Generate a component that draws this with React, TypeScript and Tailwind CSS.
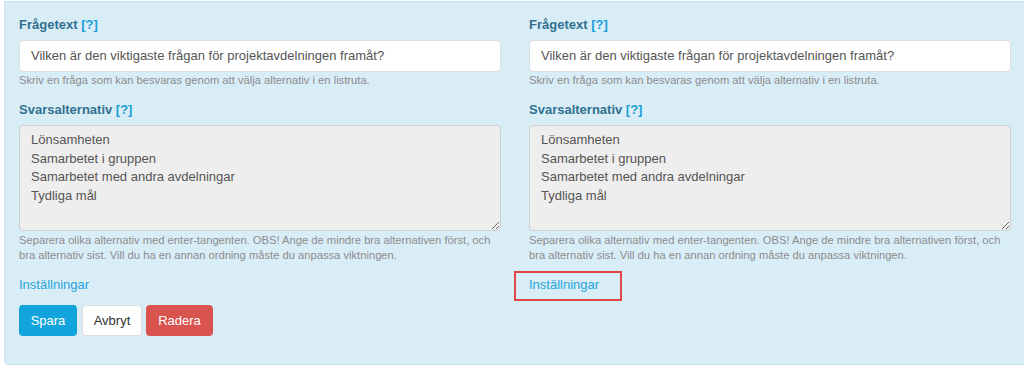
import React from "react";

const font = { fontFamily: '"Liberation Sans", Arial, sans-serif' };

function Column({ buttons, boxed }: { buttons?: boolean; boxed?: boolean }) {
  return (
    <div className="w-[482px] shrink-0">
      <div className="h-[20px] leading-[20px] text-[13px] font-bold text-[#31708f]">
        Frågetext <span className="text-[#1a9fd9]">[?]</span>
      </div>
      <div className="mt-[5px] h-[32px] rounded-[4px] border border-[#dcdcdc] bg-white px-[11px] text-[13px] leading-[30px] text-[#555]">
        Vilken är den viktigaste frågan för projektavdelningen framåt?
      </div>
      <div className="mt-px text-[11.2px] leading-[15px] text-[#8c8c8c]">
        Skriv en fråga som kan besvaras genom att välja alternativ i en listruta.
      </div>
      <div className="mt-[12px] h-[20px] leading-[20px] text-[13px] font-bold text-[#31708f]">
        Svarsalternativ <span className="text-[#1a9fd9]">[?]</span>
      </div>
      <textarea
        readOnly
        className="mt-[5px] block h-[106px] w-full resize-y rounded-[4px] border border-[#d0d0d0] bg-[#eeeeee] px-[11px] pt-[5px] text-[13px] leading-[18.7px] text-[#555] outline-none"
        style={font}
        value={"Lönsamheten\nSamarbetet i gruppen\nSamarbetet med andra avdelningar\nTydliga mål"}
      />
      <div className="mt-[2px] text-[11.2px] leading-[15px] text-[#8c8c8c]">
        Separera olika alternativ med enter-tangenten. OBS! Ange de mindre bra alternativen först, och
        bra alternativ sist. Vill du ha en annan ordning måste du anpassa viktningen.
      </div>
      <div className="relative mt-[12px] h-[20px] text-[13px] leading-[20px] text-[#25a4dc]">
        Inställningar
        {boxed && (
          <div className="absolute left-[-15px] top-[-4px] h-[30px] w-[108px] border-2 border-[#e04646]" />
        )}
      </div>
      {buttons && (
        <div className="mt-[10px] flex">
          <button className="h-[31px] w-[58px] rounded-[4px] bg-[#11a3dc] text-[13px] text-white" style={font}>
            Spara
          </button>
          <button className="ml-[5px] h-[31px] w-[60px] rounded-[4px] border border-[#dddddd] bg-white text-[13px] text-[#333]" style={font}>
            Avbryt
          </button>
          <button className="ml-[4px] h-[31px] w-[67px] rounded-[4px] bg-[#d9534f] text-[13px] text-white" style={font}>
            Radera
          </button>
        </div>
      )}
    </div>
  );
}

export default function App() {
  return (
    <div className="h-[366px] w-[1024px] overflow-hidden bg-white" style={font}>
      <div className="ml-[4px] mt-px flex h-[364px] w-[1040px] gap-[28px] rounded-bl-[4px] border border-[#c6e4f0] bg-[#d9edf7] pl-[14px] pt-[13px]">
        <Column buttons />
        <Column boxed />
      </div>
    </div>
  );
}
